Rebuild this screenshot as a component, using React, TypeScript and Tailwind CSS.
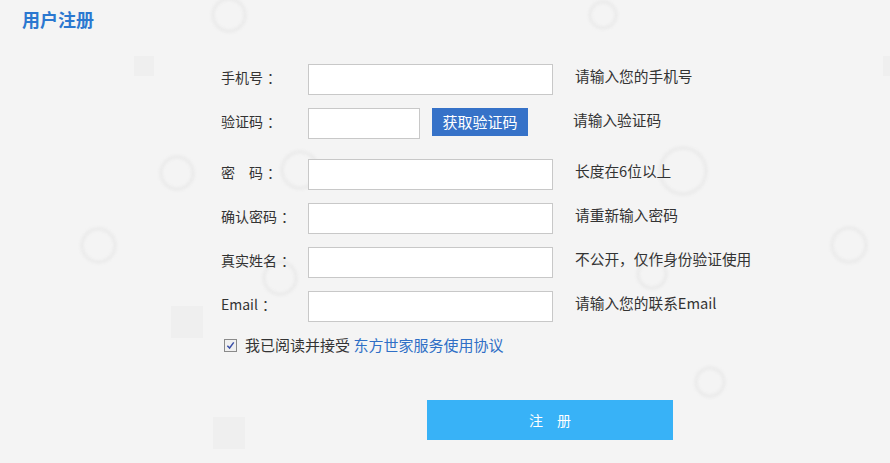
import React from "react";

const font = { fontFamily: '"Noto Sans CJK SC", "Noto Sans", sans-serif' };

function Label({ text }: { text: string }) {
  return (
    <label className="w-[87px] text-[14px] text-[#333] pb-[5px] whitespace-nowrap">
      {text}
      <span className="ml-[4px]">：</span>
    </label>
  );
}

function Field({
  label,
  hint,
  type = "text",
}: {
  label: string;
  hint: string;
  type?: string;
}) {
  return (
    <div className="flex items-center h-[31px] mb-[13px]">
      <Label text={label} />
      <input
        type={type}
        className="w-[245px] h-[31px] bg-white border border-[#c8c8c8] outline-none px-2 text-[14px]"
      />
      <span className="ml-[22px] text-[14.7px] text-[#333] pb-[7px]">{hint}</span>
    </div>
  );
}

export default function App() {
  const rings = [
    "left-[211px] top-[-3px] w-[36px] h-[36px]",
    "left-[159px] top-[155px] w-[36px] h-[36px]",
    "left-[80px] top-[227px] w-[37px] h-[37px]",
    "left-[280px] top-[150px] w-[40px] h-[40px]",
    "left-[262px] top-[260px] w-[36px] h-[36px]",
    "left-[658px] top-[146px] w-[50px] h-[50px]",
    "left-[830px] top-[226px] w-[38px] h-[38px]",
    "left-[636px] top-[258px] w-[32px] h-[32px]",
    "left-[694px] top-[366px] w-[32px] h-[32px]",
    "left-[588px] top-[0px] w-[30px] h-[30px]",
  ];
  const squares = [
    "left-[134px] top-[56px] w-[20px] h-[20px]",
    "left-[171px] top-[306px] w-[32px] h-[32px]",
    "left-[213px] top-[417px] w-[32px] h-[32px]",
    "left-[883px] top-[56px] w-[20px] h-[20px]",
  ];

  return (
    <div
      className="relative w-[890px] h-[463px] overflow-hidden bg-[#f4f4f4]"
      style={font}
    >
      {/* faint background art */}
      {rings.map((r, i) => (
        <div
          key={i}
          className={`absolute rounded-full border-[4px] border-[#ececec] blur-[1px] ${r}`}
        />
      ))}
      {squares.map((s, i) => (
        <div key={i} className={`absolute bg-[#efefef] ${s}`} />
      ))}

      <div className="relative">
        <h1 className="pt-[6px] pl-[22px] text-[18px] leading-[26px] font-bold text-[#2b78d0]">
          用户注册
        </h1>

        <form className="ml-[221px] mt-[32px]">
          <Field label="手机号" hint="请输入您的手机号" />

          <div className="flex items-center h-[31px] mb-[20px]">
            <Label text="验证码" />
            <input
              type="text"
              className="w-[112px] h-[31px] bg-white border border-[#c8c8c8] outline-none px-2 text-[14px]"
            />
            <button
              type="button"
              className="ml-[12px] w-[96px] h-[28px] self-start bg-[#3672c8] text-white text-[15px] leading-[28px]"
            >
              获取验证码
            </button>
            <span className="ml-[45px] text-[14.7px] text-[#333] pb-[7px]">请输入验证码</span>
          </div>

          <Field label="密　码" hint="长度在6位以上" type="password" />
          <Field label="确认密码" hint="请重新输入密码" type="password" />
          <Field label="真实姓名" hint="不公开，仅作身份验证使用" />
          <Field label="Email" hint="请输入您的联系Email" />

          <div className="flex items-center h-[20px] mt-[1px] ml-[3px] text-[15px] text-[#333]">
            <span className="w-[13px] h-[13px] border border-[#8a8a8a] bg-[#f0f0f0] flex items-center justify-center">
              <svg viewBox="0 0 10 10" className="w-[9px] h-[9px]">
                <path d="M1.5 5.2 L4 7.8 L8.6 1.6" fill="none" stroke="#3a4fa8" strokeWidth="1.6" />
              </svg>
            </span>
            <span className="ml-[8px]">
              我已阅读并接受 <a className="text-[#2f6fc6]">东方世家服务使用协议</a>
            </span>
          </div>

          <button
            type="button"
            className="mt-[45px] ml-[206px] w-[246px] h-[40px] bg-[#38b2f7] text-white text-[14px]"
          >
            注　册
          </button>
        </form>
      </div>
    </div>
  );
}
